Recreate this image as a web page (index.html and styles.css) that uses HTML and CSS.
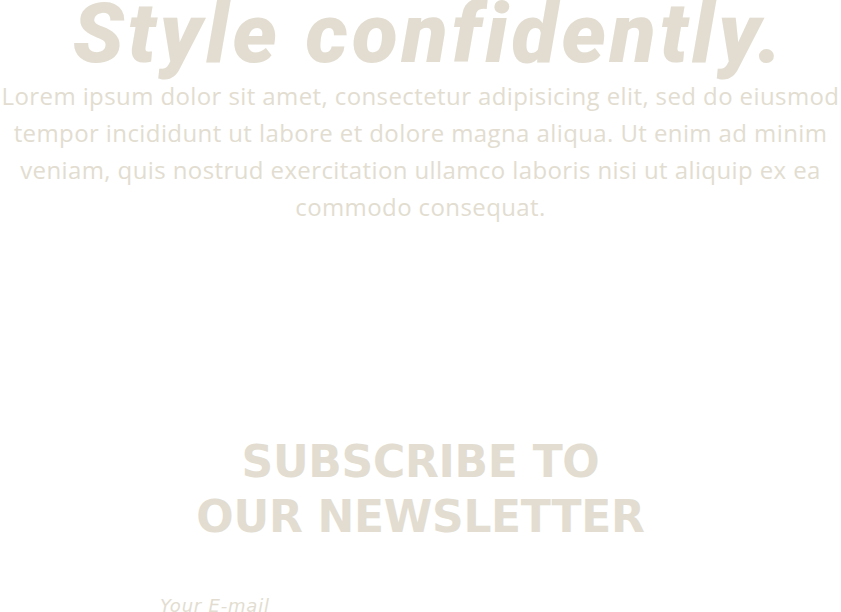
FILE: index.html
```html
<!DOCTYPE html>
<html lang="en">
<head>
<meta charset="utf-8">
<title>Style confidently</title>
<link rel="stylesheet" href="styles.css">
</head>
<body>
<main class="page">
  <section class="hero">
    <h1 class="hero-title">Style confidently.</h1>
    <p class="hero-text">Lorem ipsum dolor sit amet, consectetur adipisicing elit, sed do eiusmod<br>tempor incididunt ut labore et dolore magna aliqua. Ut enim ad minim<br>veniam, quis nostrud exercitation ullamco laboris nisi ut aliquip ex ea<br>commodo consequat.</p>
  </section>
  <section class="newsletter">
    <h2 class="newsletter-title">SUBSCRIBE TO<br>OUR NEWSLETTER</h2>
    <form class="newsletter-form">
      <input class="newsletter-input" type="email" placeholder="Your E-mail">
    </form>
  </section>
</main>
</body>
</html>
```
FILE: styles.css
```css
html, body {
  margin: 0;
  padding: 0;
  background: #ffffff;
}
body {
  color: #e2ddd0;
  font-family: "Open Sans", "Liberation Sans", sans-serif;
  overflow: hidden;
}
.page {
  display: flex;
  flex-direction: column;
  align-items: center;
}
.hero {
  display: flex;
  flex-direction: column;
  align-items: center;
  text-align: center;
}
.hero-title {
  margin: -9px 0 0 18px;
  font-family: "Roboto", sans-serif;
  font-weight: 900;
  font-style: italic;
  font-size: 84px;
  line-height: 86px;
  letter-spacing: 4px;
  white-space: nowrap;
}
.hero-text {
  margin: 0;
  font-size: 24px;
  line-height: 37px;
  letter-spacing: 0.4px;
  width: 841px;
  white-space: nowrap;
}
.newsletter {
  margin-top: 209px;
  display: flex;
  flex-direction: column;
  align-items: center;
  width: 100%;
}
.newsletter-title {
  margin: 0;
  text-align: center;
  font-family: "DejaVu Sans", sans-serif;
  font-weight: 900;
  font-size: 44px;
  line-height: 55px;
  letter-spacing: -0.3px;
}
.newsletter-form {
  margin-top: 51px;
  width: 100%;
  padding-left: 160px;
  box-sizing: border-box;
}
.newsletter-input {
  border: none;
  outline: none;
  padding: 0;
  background: transparent;
  font-family: "DejaVu Sans", sans-serif;
  font-style: italic;
  font-size: 18px;
  letter-spacing: 0.8px;
  color: #e2ddd0;
  width: 400px;
}
.newsletter-input::placeholder {
  color: #e2ddd0;
}
```
